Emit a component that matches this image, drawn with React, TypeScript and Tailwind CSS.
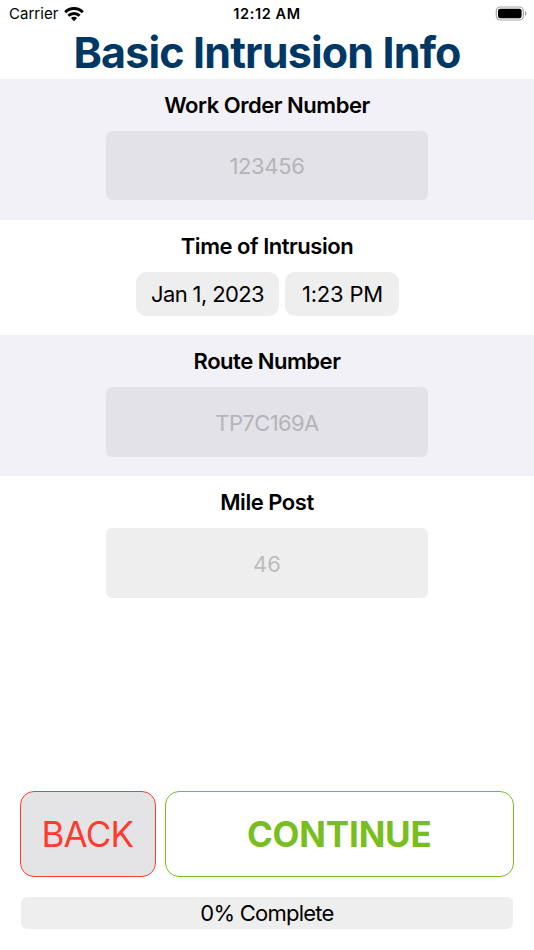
import type { ReactNode } from "react";

function StatusBar() {
  return (
    <div className="grid h-7 grid-cols-3 items-center px-[9px] text-black">
      <div className="flex items-center gap-[6px]">
        <span className="text-[15px] tracking-[0.02px]">Carrier</span>
        <svg width="20" height="15" viewBox="0 0 20 15" fill="none" stroke="currentColor" strokeWidth="3">
          <path d="M1.2 5.2a12.4 12.4 0 0 1 17.6 0" />
          <path d="M4.4 8.8a7.8 7.8 0 0 1 11.2 0" />
          <path d="M10 14.2 6.9 11.1a4.4 4.4 0 0 1 6.2 0z" fill="currentColor" stroke="none" />
        </svg>
      </div>

      <span className="text-center text-[14.5px] font-semibold tracking-[0.6px]">12:12 AM</span>

      <svg className="-mt-px -mr-[2px] justify-self-end" width="32" height="15" viewBox="0 0 32 15">
        <rect x="1.3" y="1" width="27" height="13" rx="4" fill="none" stroke="#a6a6a6" strokeWidth="1.2" />
        <rect x="3" y="2.7" width="23.6" height="9.6" rx="2.2" fill="#000" />
        <path d="M30 5.3v4.4c1-.4 1.5-1.2 1.5-2.2S31 5.7 30 5.3z" fill="#a6a6a6" />
      </svg>
    </div>
  );
}

function Section({ label, shaded, children }: { label: string; shaded?: boolean; children: ReactNode }) {
  return (
    <section className={shaded ? "bg-[#f2f1f7] pb-[19px]" : "pb-[19px]"}>
      <h2 className="flex h-[52px] items-center justify-center text-[22px] font-semibold tracking-[-0.47px]">
        {label}
      </h2>
      <div className="flex justify-center gap-[6px]">{children}</div>
    </section>
  );
}

function Field({ placeholder, className }: { placeholder: string; className: string }) {
  return (
    <input
      placeholder={placeholder}
      className={`w-[322px] rounded-[6px] text-center text-[22px] outline-none ${className}`}
    />
  );
}

export default function App() {
  return (
    <div className="flex h-[950px] w-[534px] flex-col bg-white font-['Inter',sans-serif] text-black">
      <StatusBar />

      <h1 className="flex h-[51px] items-center justify-center pb-[2px] text-[43px] font-bold tracking-[-0.84px] whitespace-nowrap text-[#003865]">
        Basic Intrusion Info
      </h1>

      <Section label="Work Order Number" shaded>
        <Field
          placeholder="123456"
          className="mb-px h-[69px] bg-[#e3e2e8] pt-px tracking-[-0.35px] placeholder:text-[#b5b4b9]"
        />
      </Section>

      <Section label="Time of Intrusion">
        <button className="h-11 w-[143px] rounded-[10px] bg-[#eeeeef] pl-px text-[22px] tracking-[-0.62px]">
          Jan 1, 2023
        </button>
        <button className="h-11 w-[114px] rounded-[10px] bg-[#eeeeef] pl-[2px] text-[22px] tracking-[-0.2px]">
          1:23 PM
        </button>
      </Section>

      <Section label="Route Number" shaded>
        <Field
          placeholder="TP7C169A"
          className="h-[70px] bg-[#e3e2e8] pt-px tracking-[-0.6px] placeholder:text-[#b5b4b9]"
        />
      </Section>

      <Section label="Mile Post">
        <Field placeholder="46" className="h-[70px] bg-[#eeeeee] pt-px placeholder:text-[#bcbcbd]" />
      </Section>

      <footer className="mt-auto px-5 pb-[21px]">
        <div className="flex gap-[9px]">
          <button className="h-[86px] w-[135.5px] rounded-[14px] border border-[#ff3b30] bg-[#e4e4e6] text-[35px] tracking-[-0.8px] text-[#ff3b30]">
            <span className="-ml-px">BACK</span>
          </button>
          <button className="h-[86px] flex-1 rounded-[14px] border border-[#78be20] text-[35px] font-bold tracking-[-0.2px] text-[#78be20]">
            CONTINUE
          </button>
        </div>

        <div className="mx-px mt-5 flex h-8 items-center justify-center rounded-[6px] bg-[#eeeeee] text-[22px] tracking-[-0.75px]">
          0% Complete
        </div>
      </footer>
    </div>
  );
}
